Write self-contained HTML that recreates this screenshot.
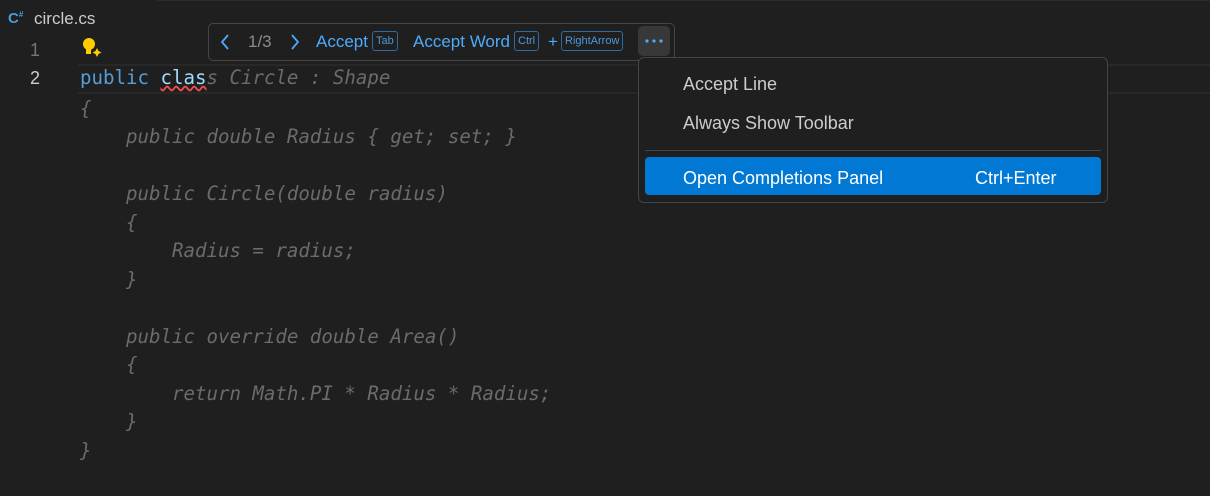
<!DOCTYPE html>
<html><head><style>
body{margin:0;width:1210px;height:496px;background:#1f1f1f;overflow:hidden;position:relative;font-family:"Liberation Sans",sans-serif}
.topline{position:absolute;left:157px;top:0;right:0;height:1px;background:#2b2b2b}
.code{position:absolute;left:0;top:37px;font-family:"DejaVu Sans Mono",monospace;font-size:19.1px;}
.ln{position:absolute;width:40px;text-align:right;color:#6e7681;font-size:18px}
.l{position:absolute;left:80px;white-space:pre;color:#6b6b6b;font-style:italic}
.cur{position:absolute;left:78px;top:64px;width:1132px;height:26px;border-top:2px solid #282828;border-bottom:2px solid #282828}
.tb{position:absolute;left:208px;top:23px;width:465px;height:36px;border:1px solid #454545;border-radius:5px;background:#1f1f1f;color:#4daafc;font-size:17px}
.tb span{position:absolute;top:8px}
.k{border:1px solid #2f6aa0;border-radius:3px;font-size:11px;padding:0 3px;height:18px;line-height:18px;color:#4d98d8}
.menu{position:absolute;left:638px;top:57px;width:468px;height:144px;border:1px solid #454545;border-radius:6px;background:#1f1f1f;color:#ccc;font-size:18px}
.menu div{position:absolute;left:44px}
</style></head><body>
<div class="topline"></div>
<div style="position:absolute;left:8px;top:10px;color:#4d9bd6;font-weight:bold;font-size:15px">C<sup style="font-size:8px">#</sup></div>
<div style="position:absolute;left:34px;top:9px;color:#ccc;font-size:17px">circle.cs</div>
<div class="cur"></div>
<div class="ln" style="top:40px;left:0">1</div>
<div class="ln" style="top:68px;left:0;color:#ccc">2</div>
<svg style="position:absolute;left:80px;top:36px" width="24" height="22"><circle cx="9" cy="8" r="6" fill="#ffcc00"/><rect x="6" y="13" width="5" height="5" fill="#ffcc00"/><path d="M17 12l1.5 3 3 1.5-3 1.5-1.5 3-1.5-3-3-1.5 3-1.5z" fill="#ffcc00"/></svg>
<div class="code">
<div class="l" style="top:29px;font-style:normal"><span style="color:#569cd6">public</span> <span style="color:#9cdcfe;text-decoration:underline wavy #f14c4c">clas</span><i>s Circle : Shape</i></div>
<div class="l" style="top:60px">{</div>
<div class="l" style="top:88px">    public double Radius { get; set; }</div>
<div class="l" style="top:145px">    public Circle(double radius)</div>
<div class="l" style="top:174px">    {</div>
<div class="l" style="top:202px">        Radius = radius;</div>
<div class="l" style="top:231px">    }</div>
<div class="l" style="top:288px">    public override double Area()</div>
<div class="l" style="top:316px">    {</div>
<div class="l" style="top:345px">        return Math.PI * Radius * Radius;</div>
<div class="l" style="top:373px">    }</div>
<div class="l" style="top:402px">}</div>
</div>
<div class="tb">
<svg style="position:absolute;left:10px;top:9px" width="12" height="18"><path d="M9 2L3 9l6 7" stroke="#4daafc" stroke-width="1.8" fill="none"/></svg>
<span style="left:39px;color:#8b8b8b">1/3</span>
<svg style="position:absolute;left:80px;top:9px" width="12" height="18"><path d="M3 2l6 7-6 7" stroke="#4daafc" stroke-width="1.8" fill="none"/></svg>
<span style="left:107px">Accept</span>
<span class="k" style="left:163px;top:7px">Tab</span>
<span style="left:204px">Accept Word</span>
<span class="k" style="left:305px;top:7px">Ctrl</span>
<span style="left:339px">+</span>
<span class="k" style="left:352px;top:7px">RightArrow</span>
<span style="left:429px;top:2px;width:32px;height:30px;background:#383838;border-radius:5px"></span>
<svg style="position:absolute;left:429px;top:2px" width="32" height="30"><circle cx="9" cy="15" r="1.6" fill="#4daafc"/><circle cx="16" cy="15" r="1.6" fill="#4daafc"/><circle cx="23" cy="15" r="1.6" fill="#4daafc"/></svg>
</div>
<div class="menu">
<div style="top:16px">Accept Line</div>
<div style="top:55px">Always Show Toolbar</div>
<span style="position:absolute;left:6px;right:6px;top:92px;height:1px;background:#454545"></span>
<span style="position:absolute;left:6px;right:6px;top:99px;height:38px;background:#0078d4;border-radius:4px"></span>
<div style="top:110px;color:#fff">Open Completions Panel</div>
<div style="top:110px;left:336px;color:#fff">Ctrl+Enter</div>
</div>
</body></html>
